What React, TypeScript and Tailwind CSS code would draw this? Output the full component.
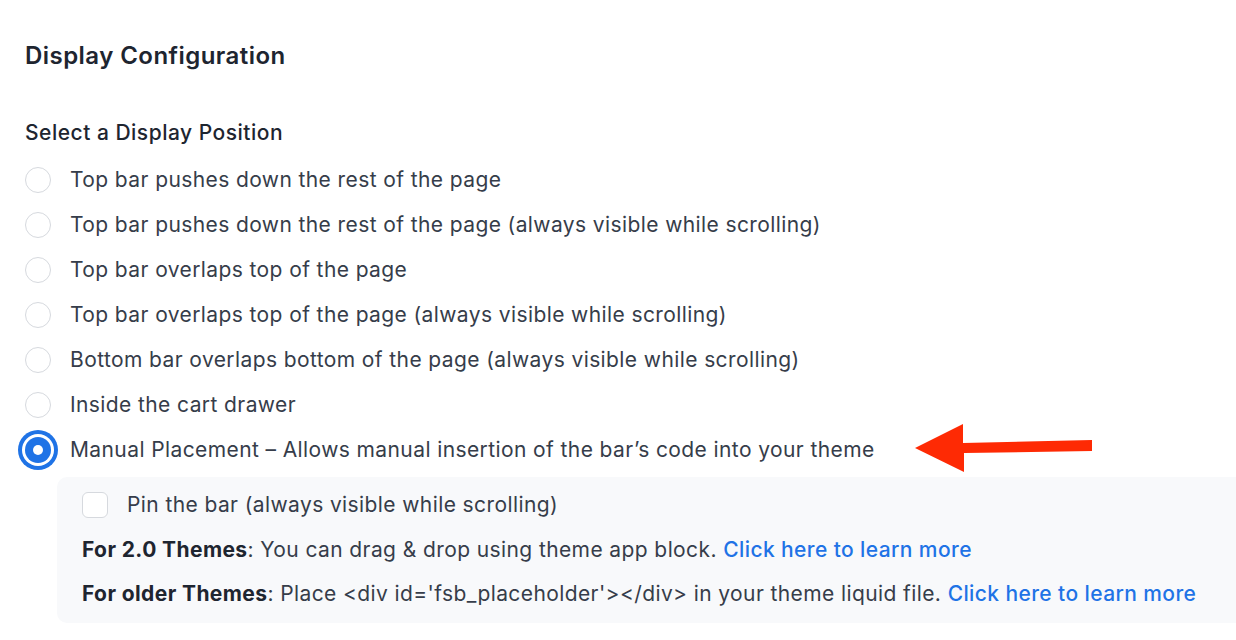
const options = [
  'Top bar pushes down the rest of the page',
  'Top bar pushes down the rest of the page (always visible while scrolling)',
  'Top bar overlaps top of the page',
  'Top bar overlaps top of the page (always visible while scrolling)',
  'Bottom bar overlaps bottom of the page (always visible while scrolling)',
  'Inside the cart drawer',
  'Manual Placement \u2013 Allows manual insertion of the bar\u2019s code into your theme',
];

function Radio({ checked }: { checked: boolean }) {
  if (checked) {
    return (
      <span className="flex h-[26px] w-[26px] shrink-0 items-center justify-center rounded-full bg-[#1f73e6] ring-[4px] ring-[#1f73e6] ring-offset-[3px] ring-offset-white">
        <span className="h-[10px] w-[10px] rounded-full bg-white" />
      </span>
    );
  }
  return <span className="h-[26px] w-[26px] shrink-0 rounded-full border border-[#d6d9de] bg-white" />;
}

export default function App() {
  const selected = 6;

  return (
    <div
      className="relative h-[640px] w-[1236px] overflow-hidden bg-white pl-[25px] pt-[40px] text-[#363d4a]"
      style={{ fontFamily: 'Inter, "Noto Sans", sans-serif' }}
    >
      {/* === HEADER === */}
      <h1 className="text-[24px] font-semibold leading-[32px] tracking-[0.45px] text-[#1e2530]">Display Configuration</h1>

      <h2 className="mt-[47px] text-[21px] font-medium leading-[28px] tracking-[0.5px] text-[#1e2530]">
        Select a Display Position
      </h2>

      {/* === POSITION OPTIONS === */}
      <div className="mt-[10px] flex flex-col">
        {options.map((label, i) => (
          <label key={label} className="flex h-[45px] items-center gap-[19px]">
            <Radio checked={i === selected} />
            <span className="text-[21px] leading-[28px] tracking-[0.4px]">{label}</span>
          </label>
        ))}
      </div>

      {/* === MANUAL PLACEMENT DETAILS === */}
      <div className="ml-[32px] mr-[-40px] mt-[5px] rounded-[10px] bg-[#f8f9fb] pb-[7px] pl-[25px] pt-[6px] text-[21px] leading-[28px] tracking-[0.4px]">
        <label className="flex h-[44px] items-center gap-[19px]">
          <span className="h-[26px] w-[26px] shrink-0 rounded-[6px] border border-[#d6d9de] bg-white" />
          <span>Pin the bar (always visible while scrolling)</span>
        </label>
        <p className="flex h-[45px] items-center">
          <span>
            <b className="font-bold text-[#1e2530]">For 2.0 Themes</b>: You can drag &amp; drop using theme app block.{' '}
            <a className="font-medium text-[#1f73e6]">Click here to learn more</a>
          </span>
        </p>
        <p className="flex h-[44px] items-center">
          <span>
            <b className="font-bold text-[#1e2530]">For older Themes</b>: Place &lt;div id='fsb_placeholder'&gt;&lt;/div&gt; in your
            theme liquid file. <a className="font-medium text-[#1f73e6]">Click here to learn more</a>
          </span>
        </p>
      </div>

      {/* Annotation arrow */}
      <svg className="absolute left-[900px] top-[415px]" width="210" height="70" viewBox="900 415 210 70">
        <polygon points="915,448 963,424 963,443 1092,440 1092,451 964,453 964,472" fill="#fe2a04" />
      </svg>
    </div>
  );
}
